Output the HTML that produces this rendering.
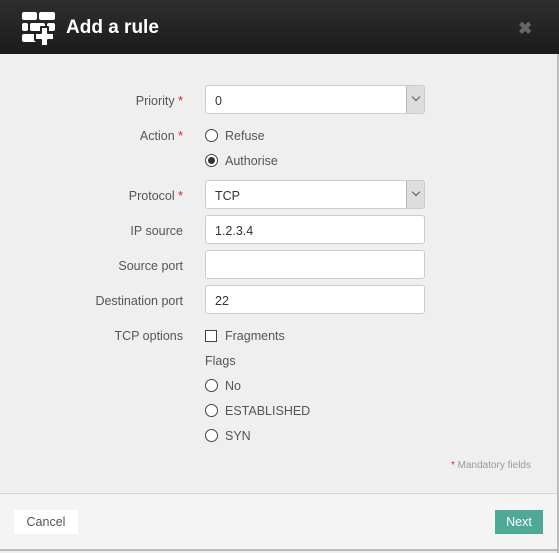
<!DOCTYPE html>
<html><head><style>
*{box-sizing:border-box;margin:0;padding:0}
body{width:559px;height:553px;background:#efefef;font-family:"Liberation Sans",sans-serif;position:relative;overflow:hidden;border-right:2px solid #bbb}
.hdr{position:absolute;left:0;top:0;width:559px;height:54px;background:linear-gradient(#2e2e2e,#1b1b1b)}
.hdr .t{position:absolute;left:66px;top:17px;color:#fff;font-size:19px;font-weight:bold}
.x{position:absolute;left:518px;top:19px;color:#666;font-size:17px;font-weight:bold}
.lbl{position:absolute;right:374px;font-size:12.5px;color:#555;text-align:right}
.lbl b{color:#d22;font-weight:normal}
.in{position:absolute;left:205px;width:220px;height:29px;background:#fff;border:1px solid #ccc;border-radius:3px;font-size:12.5px;color:#333;padding:8px 0 0 9px}
.sel:after{content:"";position:absolute;right:0;top:0;width:17px;height:27px;background:#ddd;border-left:1px solid #bbb}
.sel i{position:absolute;right:5px;top:8px;width:6px;height:6px;border-right:1px solid #555;border-bottom:1px solid #555;transform:rotate(45deg);z-index:1}
.opt{position:absolute;left:205px;font-size:12.5px;color:#555}
.r{display:inline-block;width:13px;height:13px;border:1px solid #444;border-radius:50%;vertical-align:-2px;margin-right:7px;position:relative;background:#fff}
.r.on:after{content:"";position:absolute;left:2px;top:2px;width:7px;height:7px;border-radius:50%;background:#333}
.c{display:inline-block;width:12px;height:12px;border:1px solid #444;vertical-align:-2px;margin-right:8px;background:#fff}
.foot{position:absolute;left:0;top:493px;width:557px;height:58px;background:#f4f4f4;border-top:1px solid #d6d6d6;border-bottom:2px solid #bbb}
</style></head><body>
<div class="hdr">
<svg style="position:absolute;left:0;top:0" width="60" height="54" viewBox="0 0 60 54" fill="#fff">
<rect x="22" y="12" width="15" height="8" rx="2"/><rect x="39" y="12" width="16" height="8" rx="2"/>
<rect x="22" y="23" width="6" height="8" rx="2"/><rect x="30" y="23" width="15" height="8" rx="2"/><rect x="47" y="23" width="8" height="8" rx="2"/>
<rect x="22" y="34" width="14" height="8" rx="2"/>
<path d="M41 27h7v6h6v7h-6v6h-7v-6h-6v-7h6z" stroke="#222" stroke-width="2" stroke-linejoin="round"/>
</svg>
<div class="t">Add a rule</div><div class="x">✖</div></div>

<div class="lbl" style="top:94px">Priority <b>*</b></div>
<div class="in sel" style="top:85px">0<i></i></div>
<div class="lbl" style="top:129px">Action <b>*</b></div>
<div class="opt" style="top:129px"><span class="r"></span>Refuse</div>
<div class="opt" style="top:154px"><span class="r on"></span>Authorise</div>
<div class="lbl" style="top:189px">Protocol <b>*</b></div>
<div class="in sel" style="top:180px">TCP<i></i></div>
<div class="lbl" style="top:224px">IP source</div>
<div class="in" style="top:215px">1.2.3.4</div>
<div class="lbl" style="top:259px">Source port</div>
<div class="in" style="top:250px"></div>
<div class="lbl" style="top:294px">Destination port</div>
<div class="in" style="top:285px">22</div>
<div class="lbl" style="top:329px">TCP options</div>
<div class="opt" style="top:329px"><span class="c"></span>Fragments</div>
<div class="opt" style="top:354px">Flags</div>
<div class="opt" style="top:379px"><span class="r"></span>No</div>
<div class="opt" style="top:404px"><span class="r"></span>ESTABLISHED</div>
<div class="opt" style="top:429px"><span class="r"></span>SYN</div>
<div style="position:absolute;right:26px;top:460px;font-size:10px;color:#999"><span style="color:#d22">*</span> Mandatory fields</div>
<div class="foot">
<div style="position:absolute;left:14px;top:16px;width:64px;height:24px;background:#fff;font-size:12.5px;color:#555;text-align:center;padding-top:5px">Cancel</div>
<div style="position:absolute;left:495px;top:16px;width:48px;height:24px;background:#4fa999;font-size:12.5px;color:#fff;text-align:center;padding-top:5px">Next</div>
</div>
</body></html>
